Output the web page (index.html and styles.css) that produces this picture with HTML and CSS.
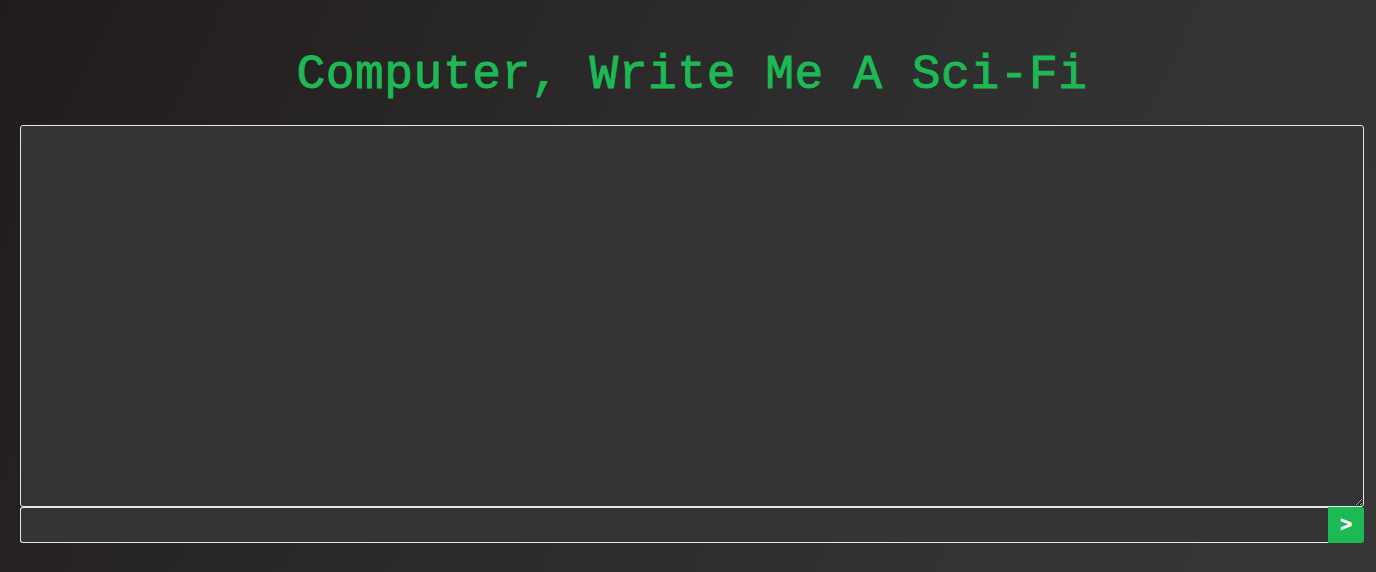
FILE: index.html
```html
<!DOCTYPE html>
<html lang="en">
<head>
<meta charset="utf-8">
<title>Computer, Write Me A Sci-Fi</title>
<link rel="stylesheet" href="styles.css">
</head>
<body>
<main class="app">
  <h1 class="title">Computer, Write Me A Sci-Fi</h1>
  <textarea class="story" aria-label="Story"></textarea>
  <form class="prompt-row">
    <input class="prompt" type="text" aria-label="Prompt">
    <button class="send" type="button">&gt;</button>
  </form>
</main>
</body>
</html>
```

FILE: styles.css
```css
html, body {
  margin: 0;
  height: 100%;
}

body {
  background: linear-gradient(115deg, #211c1c 0%, #2b2929 40%, #333333 75%, #363636 100%);
  font-family: "Liberation Sans", Arial, sans-serif;
}

.app {
  padding: 47px 12px 0 20px;
  display: flex;
  flex-direction: column;
}

.title {
  margin: 0 0 22px;
  text-align: center;
  font-family: "Liberation Mono", "DejaVu Sans Mono", monospace;
  font-size: 48px;
  line-height: 56px;
  letter-spacing: 0.5px;
  font-weight: 400;
  color: #1db954;
  -webkit-text-stroke: 0.9px #1db954;
}

.story {
  display: block;
  box-sizing: border-box;
  width: 100%;
  height: 382px;
  margin: 0;
  padding: 4px;
  background: #343434;
  border: 1px solid #e6e6e6;
  border-radius: 3px;
  color: #eee;
  font-family: "Liberation Mono", monospace;
  font-size: 14px;
  outline: none;
}

.prompt-row {
  display: flex;
  margin: 0;
}

.prompt {
  flex: 1;
  box-sizing: border-box;
  height: 36px;
  margin: 0;
  padding: 0 8px;
  background: #343434;
  border: 1px solid #e6e6e6;
  border-right: none;
  border-radius: 3px 0 0 3px;
  color: #eee;
  font-size: 14px;
  outline: none;
}

.send {
  box-sizing: border-box;
  width: 36px;
  height: 36px;
  margin: 0;
  padding: 0 0 3px;
  border: none;
  border-radius: 0 3px 3px 0;
  background: #1db954;
  color: #fff;
  font-family: "Liberation Sans", Arial, sans-serif;
  font-weight: 700;
  font-size: 20px;
  line-height: 1;
  -webkit-text-stroke: 0.6px #fff;
  cursor: pointer;
}
```
